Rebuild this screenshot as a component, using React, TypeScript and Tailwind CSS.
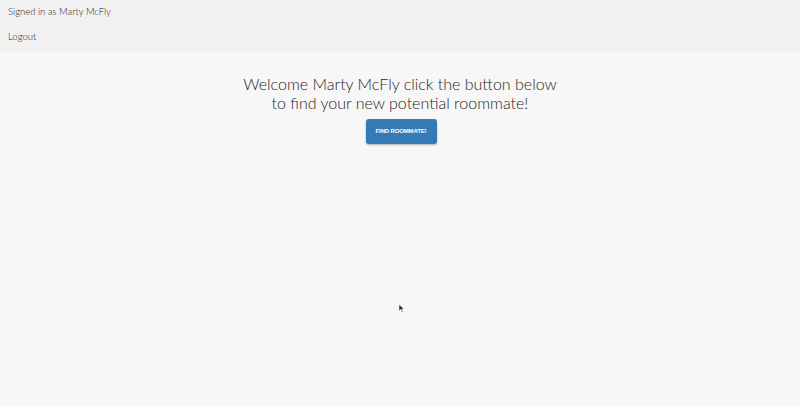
import React from "react";

export default function App() {
  return (
    <div className="w-[800px] h-[406px] bg-[#f7f7f7] flex flex-col relative overflow-hidden" style={{ fontFamily: "Lato, 'Open Sans', sans-serif" }}>
      <header className="h-[52px] bg-[#f1f1f1] flex flex-col justify-between pl-[8px] pt-[5px] pb-[8px] text-[9.5px] font-light text-[#222]">
        <div>Signed in as Marty McFly</div>
        <div>Logout</div>
      </header>
      <main className="flex flex-col items-center pt-[22px]">
        <h1 className="text-[16px] leading-[19px] font-light text-[#1e1e1e] text-center">
          Welcome Marty McFly click the button below
          <br />
          to find your new potential roommate!
        </h1>
        <button className="mt-[7px] ml-[2px] w-[71px] h-[25px] bg-[#337ab7] rounded-[3px] shadow-[0_1px_2px_rgba(0,0,0,0.3)] text-white text-[6px] font-bold tracking-tight" style={{ fontFamily: "'Liberation Sans', Arial, sans-serif" }}>
          FIND ROOMMATE!
        </button>
      </main>
      <svg className="absolute left-[398px] top-[304px]" width="8" height="9" viewBox="0 0 8 9">
        <path d="M1 0.5 L1 7 L2.8 5.4 L4.2 8.5 L5.2 8 L3.8 5 L6.2 5 Z" fill="#222" stroke="#fff" strokeWidth="0.6" />
      </svg>
    </div>
  );
}
